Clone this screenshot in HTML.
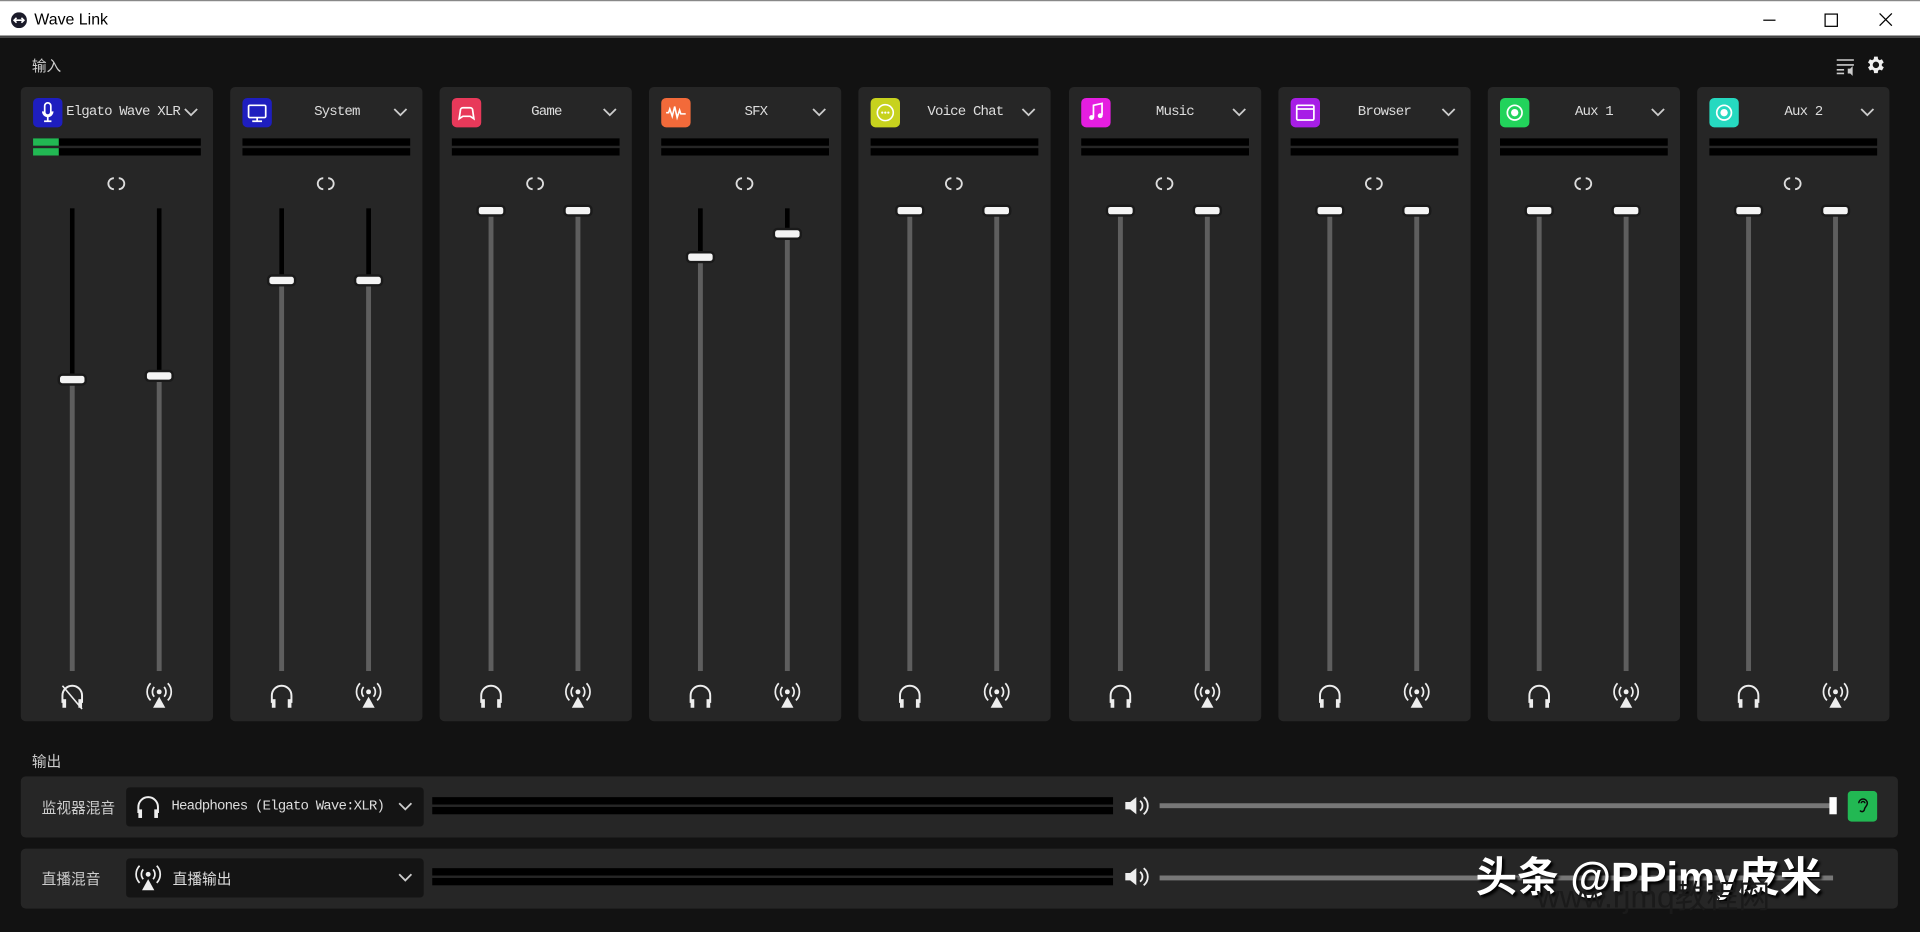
<!DOCTYPE html>
<html><head><meta charset="utf-8">
<style>
html,body{margin:0;padding:0;width:1920px;height:932px;overflow:hidden;background:#121212;}
#w{position:absolute;left:0;top:0;width:1568px;height:761px;transform:scale(1.22449);transform-origin:0 0;background:#121212;font-family:"Liberation Mono","Noto Serif CJK SC",monospace;color:#ddd;}
.tb{position:absolute;left:0;top:0;width:1568px;height:31px;background:#fff;border-top:1px solid #888;box-sizing:border-box;border-bottom:2px solid #444;}
.tb .t{position:absolute;left:28px;top:7px;font:13px "Liberation Sans",sans-serif;color:#000;}
.lbl{position:absolute;font:12px "Noto Sans CJK SC",sans-serif;color:#ccc;}
.p{position:absolute;top:71px;width:157px;height:518px;background:#262626;border-radius:4px;}
.ic{position:absolute;left:10px;top:9px;width:24px;height:24px;border-radius:4px;}
.ic svg{position:absolute;left:0;top:0}
.nm{position:absolute;left:34px;width:106px;top:14px;text-align:center;font-size:11.5px;letter-spacing:-0.7px;color:#ddd;white-space:nowrap;}
.ch{position:absolute;left:132px;top:16px;}
.m{position:absolute;left:10px;width:137px;height:6px;background:#000;}
.lk{position:absolute;left:70px;top:72px;}
.tr{position:absolute;top:99px;width:4px;height:378px;background:#5e5e5e;}
.tk{position:absolute;top:99px;width:4px;background:#000;}
.kn{position:absolute;width:20px;height:6px;background:#f4f4f4;border-radius:2px;box-shadow:0 0 0 2px #1a1a1a;}
.bi{position:absolute;top:485px;}
.row{position:absolute;left:17px;width:1533px;background:#262626;border-radius:4px;}
.dd{position:absolute;left:86px;top:9px;width:243px;height:32px;background:#141414;border-radius:3px;}
.rm{position:absolute;left:336px;width:556px;height:6px;background:#000;}
.sl{position:absolute;left:930px;width:550px;height:4px;background:#777;}
</style></head><body><div id="w">
<div class="tb">
<svg style="position:absolute;left:9px;top:9px" width="13" height="13" viewBox="0 0 13 13"><circle cx="6.5" cy="6.5" r="6.5" fill="#1b1b2a"/><path d="M2.5 6.5h8M4.5 4.5l-2 2 2 2M8.5 4.5l2 2-2 2" stroke="#fff" stroke-width="1.3" fill="none"/></svg>
<div class="t">Wave Link</div>
<div style="position:absolute;left:1440px;top:15px;width:10px;height:1px;background:#000"></div>
<div style="position:absolute;left:1490px;top:10px;width:9px;height:9px;border:1px solid #000"></div>
<svg style="position:absolute;left:1534px;top:9px" width="12" height="12"><path d="M1 1L11 11M11 1L1 11" stroke="#000" stroke-width="1"/></svg>
</div>
<div class="lbl" style="left:26px;top:45px">输入</div>
<svg style="position:absolute;left:1498px;top:45px" width="18" height="18" viewBox="0 0 18 18"><path d="M2 4h14M2 8h14M2 12h6M2 15h6" stroke="#ccc" stroke-width="1.3"/><path d="M11 11h2l2-2v8l-2-2h-2z" fill="#ccc"/></svg>
<svg style="position:absolute;left:1523px;top:44px" width="18" height="18" viewBox="0 0 24 24"><path fill="#eee" d="M19.4 13a7.5 7.5 0 000-2l2.1-1.6-2-3.5-2.5 1a7.6 7.6 0 00-1.7-1L15 3h-4l-.4 2.9a7.6 7.6 0 00-1.7 1l-2.5-1-2 3.5L6.5 11a7.5 7.5 0 000 2l-2.1 1.6 2 3.5 2.5-1a7.6 7.6 0 001.7 1L11 21h4l.4-2.9a7.6 7.6 0 001.7-1l2.5 1 2-3.5zM13 15.5A3.5 3.5 0 1113 8.5a3.5 3.5 0 010 7z" transform="translate(-1 0)"/></svg>

<div id="panels"></div>

<div class="lbl" style="left:26px;top:613px">输出</div>
<div class="row" style="top:634px;height:50px">
 <div class="lbl" style="left:17px;top:17px;color:#ccc">监视器混音</div>
 <div class="dd">
  <svg style="position:absolute;left:7px;top:5px" width="22" height="22" viewBox="0 0 22 22"><path d="M3 16v-5a8 8 0 0116 0v5" stroke="#eee" stroke-width="1.6" fill="none"/><rect x="3" y="13" width="3" height="7" fill="#eee"/><rect x="16" y="13" width="3" height="7" fill="#eee"/></svg>
  <div style="position:absolute;left:37px;top:9px;font-size:11.5px;letter-spacing:-0.7px;color:#ddd;white-space:nowrap">Headphones (Elgato Wave:XLR)</div>
  <svg style="position:absolute;left:222px;top:12px" width="12" height="8"><path d="M1 1l5 5 5-5" stroke="#ccc" stroke-width="1.5" fill="none"/></svg>
 </div>
 <div class="rm" style="top:17px"></div><div class="rm" style="top:25px"></div>
 <svg style="position:absolute;left:900px;top:15px" width="22" height="18" viewBox="0 0 22 18"><path d="M2 6h4l5-4v14l-5-4H2z" fill="#eee"/><path d="M14 5a5 5 0 010 8M17 2a9 9 0 010 14" stroke="#eee" stroke-width="1.5" fill="none"/></svg>
 <div class="sl" style="top:22px"></div>
 <div style="position:absolute;left:1477px;top:17px;width:6px;height:14px;background:#fff"></div>
 <div style="position:absolute;left:1492px;top:12px;width:24px;height:25px;background:#22b853;border-radius:3px"><svg width="24" height="25" viewBox="0 0 24 25"><path d="M9 10a3.5 3.5 0 117 0c0 2.5-2.5 3-2.5 5.5A2 2 0 0110 16M11 10a1.5 1.5 0 013 0" stroke="#0a0a0a" stroke-width="1.2" fill="none"/></svg></div>
</div>
<div class="row" style="top:693px;height:49px">
 <div class="lbl" style="left:17px;top:16px">直播混音</div>
 <div class="dd" style="top:8px">
  <svg style="position:absolute;left:6px;top:3px" width="24" height="26" viewBox="0 0 24 26"><circle cx="12" cy="10" r="2" fill="#eee"/><path d="M8 6a6 6 0 000 8M16 6a6 6 0 010 8M5 3a10 10 0 000 14M19 3a10 10 0 010 14" stroke="#eee" stroke-width="1.4" fill="none"/><path d="M12 14l5 9H7z" fill="#eee"/></svg>
  <div style="position:absolute;left:38px;top:8px;font:12px 'Noto Sans CJK SC',sans-serif;color:#ddd">直播输出</div>
  <svg style="position:absolute;left:222px;top:12px" width="12" height="8"><path d="M1 1l5 5 5-5" stroke="#ccc" stroke-width="1.5" fill="none"/></svg>
 </div>
 <div class="rm" style="top:16px"></div><div class="rm" style="top:24px"></div>
 <svg style="position:absolute;left:900px;top:14px" width="22" height="18" viewBox="0 0 22 18"><path d="M2 6h4l5-4v14l-5-4H2z" fill="#eee"/><path d="M14 5a5 5 0 010 8M17 2a9 9 0 010 14" stroke="#eee" stroke-width="1.5" fill="none"/></svg>
 <div class="sl" style="top:22px"></div>
</div>
<div style="position:absolute;left:1205px;top:689px;font:bold 34px 'Liberation Sans','Noto Sans CJK SC',sans-serif;color:#fff;text-shadow:2px 2px 2px #000;white-space:nowrap">头条 @PPimy皮米</div>
<div style="position:absolute;left:1255px;top:712px;font:26px 'Liberation Sans','Noto Sans CJK SC',sans-serif;color:#1a1a1a;white-space:nowrap">www.rjmq教程网</div>
</div>
<script>
var names=["Elgato Wave XLR","System","Game","SFX","Voice Chat","Music","Browser","Aux 1","Aux 2"];
var cols=["#1e1ebf","#1e1ebf","#e8395a","#f26a3a","#c7d21e","#e51ee0","#a71ee6","#22d35b","#26d9c0"];
var k=[[310,307],[229,229],[172,172],[210,191],[172,172],[172,172],[172,172],[172,172],[172,172]];
var ico=[
'<path d="M12 4a2.5 2.5 0 00-2.5 2.5v5a2.5 2.5 0 005 0v-5A2.5 2.5 0 0012 4zM8 11a4 4 0 008 0M12 15v4M9 19h6" stroke="#fff" stroke-width="1.4" fill="none"/>',
'<rect x="5" y="6" width="14" height="10" rx="1" stroke="#fff" stroke-width="1.4" fill="none"/><path d="M12 16v3M8 19h8" stroke="#fff" stroke-width="1.4"/>',
'<path d="M6 17l1-7a2 2 0 012-2h6a2 2 0 012 2l1 7-3-2H9z" stroke="#fff" stroke-width="1.4" fill="none"/>',
'<path d="M4 12h2l1-3 2 6 2-8 2 9 2-6 1 3h4" stroke="#fff" stroke-width="1.3" fill="none"/>',
'<circle cx="12" cy="12" r="6.5" stroke="#fff" stroke-width="1.3" fill="none"/><circle cx="9.5" cy="12" r=".9" fill="#fff"/><circle cx="12" cy="12" r=".9" fill="#fff"/><circle cx="14.5" cy="12" r=".9" fill="#fff"/>',
'<path d="M10 16V6l7-1.5V14" stroke="#fff" stroke-width="1.4" fill="none"/><circle cx="8.5" cy="16" r="2" fill="#fff"/><circle cx="15.5" cy="14.5" r="2" fill="#fff"/>',
'<rect x="5" y="6" width="14" height="12" rx="1" stroke="#fff" stroke-width="1.4" fill="none"/><path d="M5 9h14" stroke="#fff" stroke-width="1.4"/>',
'<circle cx="12" cy="12" r="6" stroke="#fff" stroke-width="1.4" fill="none"/><circle cx="12" cy="12" r="3" fill="#fff"/>',
'<circle cx="12" cy="12" r="6" stroke="#fff" stroke-width="1.4" fill="none"/><circle cx="12" cy="12" r="3" fill="#fff"/>'];
var hp='<svg width="22" height="24" viewBox="0 0 22 24"><path d="M3 18v-6a8 8 0 0116 0v6" stroke="#eee" stroke-width="1.6" fill="none"/><rect x="3" y="15" width="3" height="7" fill="#eee"/><rect x="16" y="15" width="3" height="7" fill="#eee"/>X</svg>';
var bc='<svg width="24" height="26" viewBox="0 0 24 26"><circle cx="12" cy="10" r="2" fill="#eee"/><path d="M8 6a6 6 0 000 8M16 6a6 6 0 010 8M5 3a10 10 0 000 14M19 3a10 10 0 010 14" stroke="#eee" stroke-width="1.4" fill="none"/><path d="M12 14l5 9H7z" fill="#eee"/></svg>';
var h='';
for(var i=0;i<9;i++){
 var L=17+i*171.1;
 h+='<div class="p" style="left:'+L+'px">';
 h+='<div class="ic" style="background:'+cols[i]+'"><svg width="24" height="24" viewBox="0 0 24 24">'+ico[i]+'</svg></div>';
 h+='<div class="nm"'+(i==0?' style="left:37px;width:96px;text-align:left"':'')+'>'+names[i]+'</div>';
 h+='<svg class="ch" width="14" height="10"><path d="M2 2l5 5 5-5" stroke="#ccc" stroke-width="1.5" fill="none"/></svg>';
 h+='<div class="m" style="top:42px"></div><div class="m" style="top:50px"></div>';
 if(i==0)h+='<div style="position:absolute;left:10px;top:42px;width:21px;height:6px;background:#22b853"></div><div style="position:absolute;left:10px;top:50px;width:21px;height:6px;background:#22b853"></div>';
 h+='<svg class="lk" width="16" height="14" viewBox="0 0 16 14"><path d="M6 2.5a4.5 4.5 0 000 9M10 2.5a4.5 4.5 0 010 9" stroke="#ddd" stroke-width="1.5" fill="none"/></svg>';
 var xs=[40,111];
 for(var j=0;j<2;j++){
  var ky=k[i][j]-71;
  h+='<div class="tr" style="left:'+xs[j]+'px"></div>';
  h+='<div class="tk" style="left:'+xs[j]+'px;height:'+(ky-99)+'px"></div>';
  h+='<div class="kn" style="left:'+(xs[j]-8)+'px;top:'+(ky-3)+'px"></div>';
 }
 var hh=hp; if(i==0)hh=hp.replace('X','<path d="M3 4l16 19" stroke="#eee" stroke-width="1.3"/>'); else hh=hp.replace('X','');
 h+='<div class="bi" style="left:31px">'+hh+'</div><div class="bi" style="left:101px;top:484px">'+bc+'</div>';
 h+='</div>';
}
document.getElementById('panels').innerHTML=h;
</script>
</body></html>
